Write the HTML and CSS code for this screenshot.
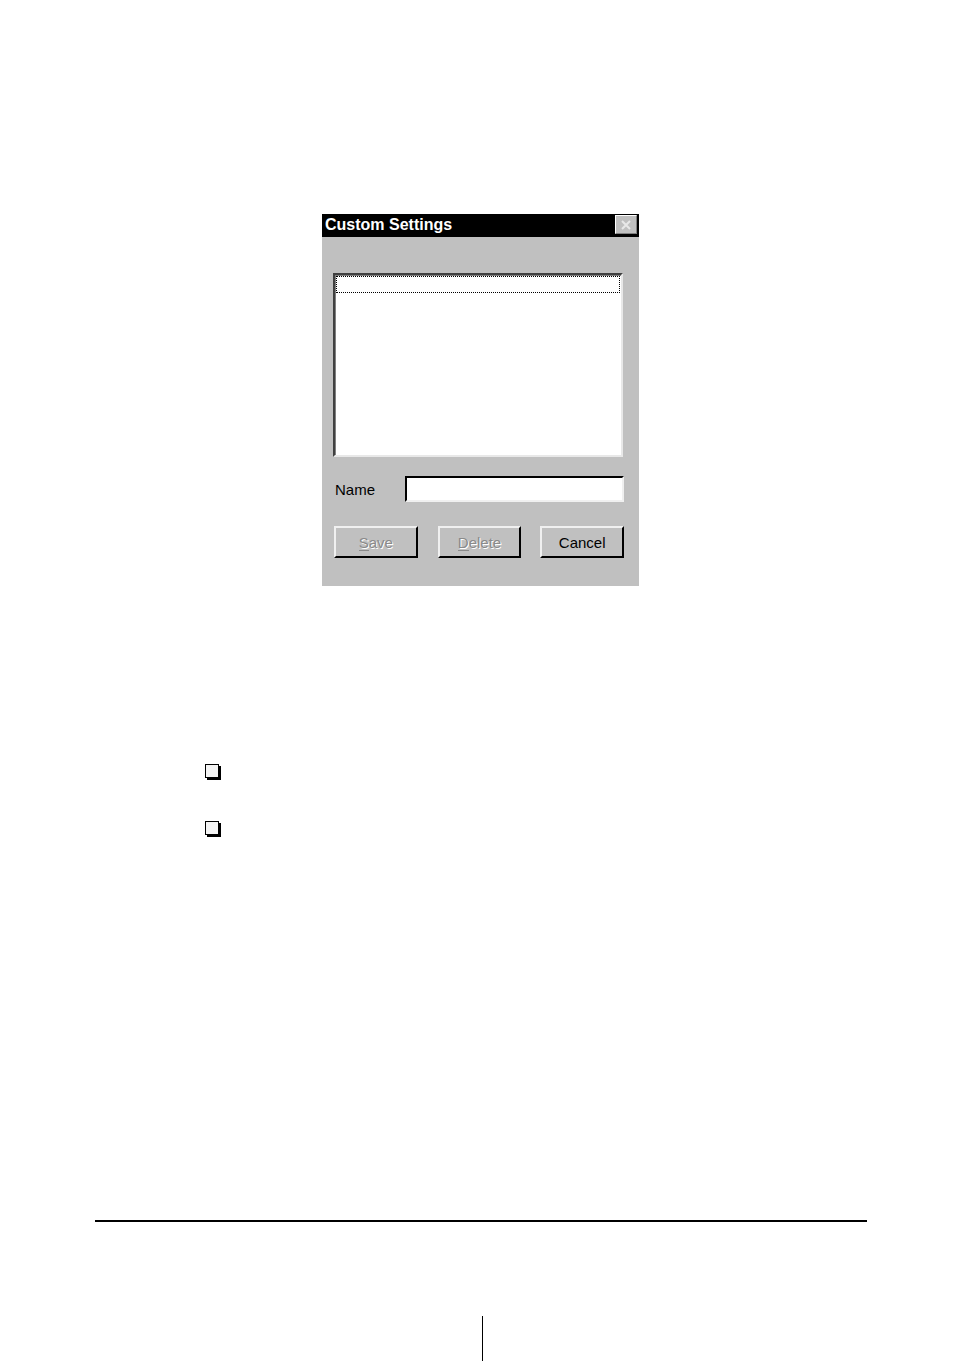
FILE: index.html
```html
<!DOCTYPE html>
<html lang="en">
<head>
  <meta charset="UTF-8">
  <meta name="viewport" content="width=device-width,initial-scale=1.0">
  <title>Custom Settings</title>
  <link rel="stylesheet" href="styles.css">
</head>
<body>

  <div class="page">

    <!-- dialog -->
    <div class="dialog">
      <div class="titlebar">
        <span class="title">Custom Settings</span>
        <span class="close">
          <svg width="14" height="12" viewBox="0 0 14 12">
            <path d="M3 2 L11 10 M11 2 L3 10" stroke="#e8e8e8" stroke-width="2"/>
          </svg>
        </span>
      </div>

      <div class="dlg-body">
        <div class="listbox">
          <div class="row focused"></div>
        </div>

        <div class="name-row">
          <label for="name">Name</label>
          <input id="name" type="text">
        </div>

        <div class="buttons">
          <button class="btn" disabled><span class="key">S</span>ave</button>
          <button class="btn" disabled><span class="key">D</span>elete</button>
          <button class="btn">Cancel</button>
        </div>
      </div>
    </div>

    <!-- checklist -->
    <ul class="checks">
      <li><span class="box"></span></li>
      <li><span class="box"></span></li>
    </ul>

    <!-- footer -->
    <div class="rule"></div>
    <div class="footer">
      <span class="divider"></span>
    </div>

  </div>

</body>
</html>
```

FILE: styles.css
```css
*{box-sizing:border-box;margin:0;padding:0}
body{
  background:#fff;
  font-family:"Liberation Sans",Arial,sans-serif;
  color:#000;
}
.page{
  width:954px;
  height:1361px;
  padding-top:214px;
  overflow:hidden;
}
/* dialog */
.dialog{
  width:317px;
  height:372px;
  margin-left:322px;
  background:#c0c0c0;
}
.titlebar{
  height:23px;
  background:#000;
  display:flex;
  align-items:center;
  justify-content:space-between;
  padding:0 2px 0 3px;
}
.title{
  color:#fff;
  font-weight:700;
  font-size:16px;
  margin-top:-2px;
}
.close{
  width:22px;
  height:19px;
  background:#c0c0c0;
  border:1px solid;
  border-color:#fff #808080 #808080 #fff;
  display:flex;
  align-items:center;
  justify-content:center;
  margin-top:-2px;
}
.dlg-body{
  padding:36px 15px 0 11px;
}
.listbox{
  width:290px;
  height:184px;
  background:#fff;
  border:2px solid;
  border-color:#404040 #e8e8e8 #e8e8e8 #404040;
  box-shadow:inset 1px 1px 0 #808080;
  padding:1px;
}
.row{height:17px}
.row.focused{outline:1px dotted #000;outline-offset:-1px}
.name-row{
  display:flex;
  align-items:center;
  margin-top:19px;
  height:26px;
}
.name-row label{
  font-size:15px;
  width:72px;
  padding-left:2px;
}
.name-row input{
  width:219px;
  height:26px;
  background:#fff;
  border:2px solid;
  border-color:#000 #f0f0f0 #f0f0f0 #000;
  font:inherit;
}
.buttons{
  display:flex;
  gap:20px;
  margin-top:24px;
  padding-left:1px;
}
.btn{
  width:84px;
  height:32px;
  background:#c0c0c0;
  border:2px solid;
  border-color:#f0f0f0 #000 #000 #f0f0f0;
  font-family:"Liberation Sans",Arial,sans-serif;
  font-size:15px;
  color:#000;
  padding-top:1px;
}
.btn + .btn + .btn{margin-left:-1px}
.btn:disabled{
  color:#8a8a8a;
  text-shadow:1px 1px 0 #fff;
}
.key{
  display:inline-block;
  border-bottom:1px solid #8a8a8a;
  line-height:15px;
}
/* checklist */
.checks{
  list-style:none;
  margin:178px 0 0 205px;
  display:flex;
  flex-direction:column;
  gap:41px;
}
.checks li{height:16px;display:flex}
.box{
  width:14px;
  height:14px;
  border:1px solid #000;
  background:#f4f4f4;
  box-shadow:2px 2px 0 #000;
}
/* footer */
.rule{
  margin:383px 0 0 95px;
  width:772px;
  height:2px;
  background:#000;
}
.footer{
  padding-top:94px;
  padding-left:482px;
}
.divider{
  display:block;
  width:1px;
  height:46px;
  background:#000;
}
```
